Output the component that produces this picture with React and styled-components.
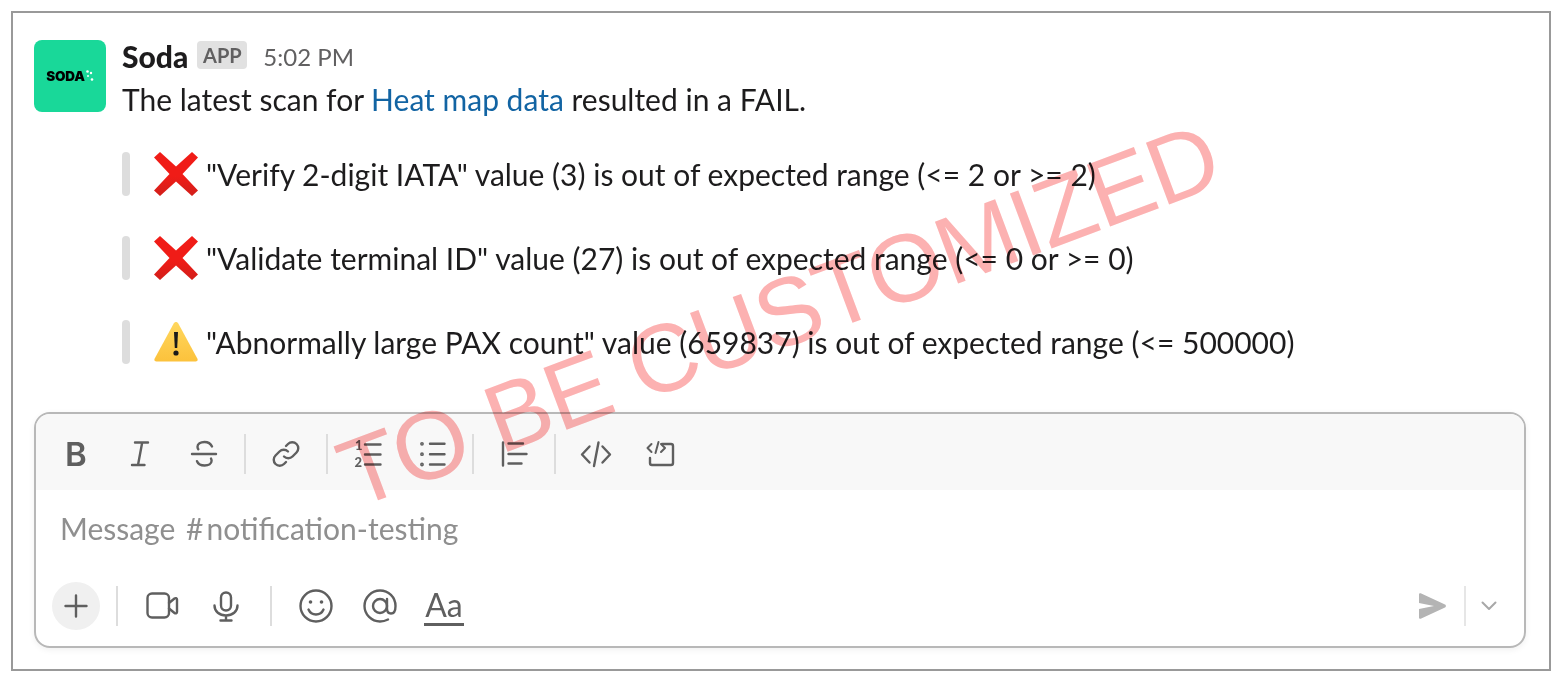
import React from "react";
import styled, { createGlobalStyle } from "styled-components";

const Global = createGlobalStyle`
  html, body {
    margin: 0;
    background: #fff;
  }
  * {
    box-sizing: border-box;
  }
`;

const Svg = ({ size = 40, children }) => (
  <svg
    width={size}
    height={size}
    viewBox="0 0 40 40"
    fill="none"
    stroke="#5f5f5f"
    strokeWidth="2.4"
    strokeLinecap="round"
    strokeLinejoin="round"
  >
    {children}
  </svg>
);

const ItalicIcon = () => (
  <Svg>
    <path d="M15 8.500h13M12 31h12.500M22.200 8.500 18 31" />
  </Svg>
);

const StrikeIcon = () => (
  <Svg>
    <path d="M8 20h24" />
    <path d="M28 12.500C26.800 9.800 24 8 20.500 8c-4 0-7 2-7 4.800 0 1 .3 1.800.8 2.500M27 24.500c.4.800.6 1.500.6 2.200 0 3-3 4.800-7 4.800-3.800 0-6.500-1.500-7.600-4.300" />
  </Svg>
);

const LinkIcon = () => (
  <Svg>
    <path d="M18 22.500a6 6 0 0 0 8.500 0l4-4a6 6 0 0 0-8.500-8.500l-2 2" />
    <path d="M22 17.500a6 6 0 0 0-8.500 0l-4 4a6 6 0 0 0 8.500 8.500l2-2" />
  </Svg>
);

const NumberedIcon = () => (
  <Svg>
    <path d="M17 10.500h15.500M17 20.500h15.500M17 30.500h15.500" />
    <NumeralText x="7" y="15.500">1</NumeralText>
    <NumeralText x="6.500" y="32.500">2</NumeralText>
  </Svg>
);

const BulletIcon = () => (
  <Svg>
    <path d="M18 9.800h14.500M18 20.200h14.500M18 30.500h14.500" />
    <circle cx="10" cy="9.800" r="0.700" fill="#5f5f5f" />
    <circle cx="10" cy="20.200" r="0.700" fill="#5f5f5f" />
    <circle cx="10" cy="30.500" r="0.700" fill="#5f5f5f" />
  </Svg>
);

const QuoteIcon = () => (
  <Svg>
    <path d="M9 8.500v23M14.500 9.500h14.500M14.500 20h18M14.500 29.500h13" />
  </Svg>
);

const CodeIcon = () => (
  <Svg>
    <path d="M13.500 12.500 6 20.500l7.500 8M26.500 12.500l7.500 8-7.500 8M22.500 8.500 18 32" />
  </Svg>
);

const CodeBlockIcon = () => (
  <Svg>
    <path d="M22 10h9a2 2 0 0 1 2 2v17a2 2 0 0 1-2 2H12a2 2 0 0 1-2-2v-5" />
    <path d="M11.500 10 7.500 14l4 4M21 10l4 4-4 4M18.500 8 15.500 19" strokeWidth="2" />
  </Svg>
);

const PlusIcon = () => (
  <Svg>
    <path d="M20 9.500v21M9.500 20h21" />
  </Svg>
);

const VideoIcon = () => (
  <Svg>
    <rect x="5.500" y="7.500" width="21.500" height="24" rx="4.500" />
    <path d="M27 17 32.500 12.500c1-.7 2.500-.3 2.500 1v12.500c0 1.300-1.500 1.700-2.500 1L27 22.500" />
  </Svg>
);

const MicIcon = () => (
  <Svg>
    <rect x="15" y="6.500" width="10" height="18" rx="5" />
    <path d="M8.500 19.500c0 6 5 10 11.500 10s11.500-4 11.500-10M20 29.500V34M14.500 34.500h11" />
  </Svg>
);

const SmileIcon = () => (
  <Svg>
    <circle cx="20" cy="20" r="15.500" />
    <circle cx="14.500" cy="16" r="1.800" fill="#5f5f5f" stroke="none" />
    <circle cx="25.500" cy="16" r="1.800" fill="#5f5f5f" stroke="none" />
    <path d="M12.500 23.500c1.500 3.500 4.200 5 7.500 5s6-1.500 7.500-5" />
  </Svg>
);

const AtIcon = () => (
  <Svg>
    <circle cx="20" cy="20" r="7" />
    <path d="M27 13v9.500c0 3.500 1.800 5 4 5 2.800 0 4.500-3 4.500-7.500C35.500 11 28.500 4.500 20 4.500 11.500 4.500 4.500 11.500 4.500 20S11.500 35.500 20 35.500c3 0 5.500-.7 8-2" />
  </Svg>
);

const SendIcon = () => (
  <svg width="28" height="26" viewBox="0 0 28 26">
    <path
      d="M1 1.500c0-1 .8-1.500 1.700-1.200L27 11.500c1.200.5 1.200 2.500 0 3L2.700 25.700C1.800 26 1 25.500 1 24.500V16l15-3L1 10Z"
      fill="#b4b4b4"
    />
  </svg>
);

const ChevronIcon = () => (
  <svg width="16" height="10" viewBox="0 0 16 10" fill="none">
    <path d="M1.500 1.500 8 8l6.500-6.500" stroke="#a8a8a8" strokeWidth="2" strokeLinecap="round" strokeLinejoin="round" />
  </svg>
);

const LogoDots = () => (
  <svg width="8" height="12" viewBox="0 0 8 12" fill="#fff">
    <circle cx="1.500" cy="1.500" r="1.300" />
    <circle cx="5" cy="3" r="1.200" />
    <circle cx="2" cy="6" r="1" />
    <circle cx="6" cy="9.500" r="1.300" />
  </svg>
);

const CrossEmoji = () => (
  <svg width="44" height="44" viewBox="0 0 44 44">
    <defs>
      <linearGradient id="crossFill" x1="0" y1="0" x2="0" y2="1">
        <stop offset="0.55" stopColor="#f01c17" />
        <stop offset="1" stopColor="#d11f1a" />
      </linearGradient>
    </defs>
    <path
      d="M6 0 22 14.500 38 0l6 5.500L28.500 22 44 38.500 38 44 22 29.500 6 44l-6-5.500L15.500 22 0 5.500Z"
      fill="url(#crossFill)"
    />
  </svg>
);

const WarningEmoji = () => (
  <svg width="44" height="44" viewBox="0 0 44 44">
    <defs>
      <linearGradient id="warnFill" x1="0" y1="0" x2="0" y2="1">
        <stop offset="0" stopColor="#ffd75e" />
        <stop offset="1" stopColor="#fcc23c" />
      </linearGradient>
    </defs>
    <path
      d="M19.700 3.500c1.100-2 3.500-2 4.600 0l19 35c.8 1.500 0 2.900-1.700 2.900H2.400C.7 41.400-.1 40 .7 38.500Z"
      fill="url(#warnFill)"
    />
    <path d="M20 12h4l-.8 16h-2.400Z" fill="#1a1a1a" />
    <circle cx="22" cy="33" r="2.600" fill="#1a1a1a" />
  </svg>
);

const alerts = [
  { id: 1, emoji: <CrossEmoji />, text: '"Verify 2-digit IATA" value (3) is out of expected range (<= 2 or >= 2)' },
  { id: 2, emoji: <CrossEmoji />, text: '"Validate terminal ID" value (27) is out of expected range (<= 0 or >= 0)' },
  { id: 3, emoji: <WarningEmoji />, text: '"Abnormally large PAX count" value (659837) is out of expected range (<= 500000)' },
];

const App = () => {
  return (
    <Frame>
      <Global />
      <Message>
        <Avatar>
          <LogoWord>SODA</LogoWord>
          <LogoDots />
        </Avatar>
        <Body>
          <Header>
            <Name>Soda</Name>
            <AppBadge>APP</AppBadge>
            <Time>5:02 PM</Time>
          </Header>
          <Line>
            The latest scan for <Anchor>Heat map data</Anchor> resulted in a FAIL.
          </Line>
          <QuoteList>
            {alerts.map((a) => (
              <Quote key={a.id}>
                <QuoteBar />
                <Emoji>{a.emoji}</Emoji>
                <span>{a.text}</span>
              </Quote>
            ))}
          </QuoteList>
        </Body>
      </Message>

      <Composer>
        <Toolbar>
          <ToolButton><BoldMark>B</BoldMark></ToolButton>
          <ToolButton><ItalicIcon /></ToolButton>
          <ToolButton><StrikeIcon /></ToolButton>
          <Divider />
          <ToolButton><LinkIcon /></ToolButton>
          <Divider />
          <ToolButton><NumberedIcon /></ToolButton>
          <ToolButton><BulletIcon /></ToolButton>
          <Divider />
          <ToolButton><QuoteIcon /></ToolButton>
          <Divider />
          <ToolButton><CodeIcon /></ToolButton>
          <ToolButton><CodeBlockIcon /></ToolButton>
        </Toolbar>
        <Placeholder>
          Message <Hash>#</Hash>notification-testing
        </Placeholder>
        <Actions>
          <PlusButton><PlusIcon /></PlusButton>
          <ActionDivider />
          <ToolButton><VideoIcon /></ToolButton>
          <ToolButton><MicIcon /></ToolButton>
          <ActionDivider />
          <ToolButton><SmileIcon /></ToolButton>
          <ToolButton><AtIcon /></ToolButton>
          <ToolButton><FormatText>Aa</FormatText></ToolButton>
          <SendGroup>
            <SendIcon />
            <SendDivider />
            <ChevronIcon />
          </SendGroup>
        </Actions>
      </Composer>

      <Watermark>TO BE CUSTOMIZED</Watermark>
    </Frame>
  );
};

const Frame = styled.div`
  position: relative;
  overflow: hidden;
  width: 1540px;
  height: 660px;
  margin: 11px;
  padding: 27px 23px 0 21px;
  border: 2px solid #999;
  font-family: "Lato", sans-serif;
  color: #1d1c1d;
`;

const Message = styled.div`
  display: flex;
  gap: 16px;
`;

const Avatar = styled.div`
  display: flex;
  align-items: center;
  justify-content: center;
  gap: 1px;
  flex: none;
  width: 72px;
  height: 72px;
  border-radius: 8px;
  background: #19d899;
`;

const LogoWord = styled.span`
  font-family: "Inter", sans-serif;
  font-size: 13.500px;
  font-weight: 900;
  letter-spacing: -0.2px;
  color: #000;
`;

const Body = styled.div`
  display: flex;
  flex-direction: column;
`;

const Header = styled.div`
  display: flex;
  align-items: center;
  height: 44px;
  margin-top: -6px;
`;

const Name = styled.span`
  font-size: 30px;
  font-weight: 900;
`;

const AppBadge = styled.span`
  display: flex;
  align-items: center;
  justify-content: center;
  width: 50px;
  height: 28px;
  margin: 0 16px 2px 9px;
  border-radius: 4px;
  background: #e1e1e1;
  color: #616061;
  font-size: 20px;
  font-weight: 700;
`;

const Time = styled.span`
  font-size: 24px;
  color: #616061;
`;

const Line = styled.div`
  height: 44px;
  font-size: 30px;
  line-height: 42px;
`;

const Anchor = styled.span`
  color: #1264a3;
`;

const QuoteList = styled.div`
  display: flex;
  flex-direction: column;
  gap: 40px;
  margin-top: 30px;
`;

const Quote = styled.div`
  display: flex;
  align-items: center;
  height: 44px;
  font-size: 30px;
  line-height: 44px;
  white-space: nowrap;
`;

const QuoteBar = styled.span`
  flex: none;
  width: 8px;
  height: 44px;
  margin-right: 24px;
  border-radius: 4px;
  background: #ddd;
`;

const Emoji = styled.span`
  display: flex;
  flex: none;
  width: 44px;
  height: 44px;
  margin-right: 8px;
`;

const Composer = styled.div`
  width: 1492px;
  height: 236px;
  margin-top: 48px;
  overflow: hidden;
  border: 2px solid #b8b8b8;
  border-radius: 16px;
  box-shadow: 0 2px 6px rgba(0, 0, 0, 0.06);
`;

const Toolbar = styled.div`
  display: flex;
  align-items: center;
  height: 76px;
  padding: 4px 8px 0;
  background: #f8f8f8;
`;

const ToolButton = styled.span`
  display: flex;
  align-items: center;
  justify-content: center;
  flex: none;
  width: 64px;
  height: 48px;
`;

const BoldMark = styled.span`
  font-family: "Inter", sans-serif;
  font-size: 33px;
  font-weight: 600;
  line-height: 40px;
  color: #5f5f5f;
`;

const NumeralText = styled.text`
  font-family: "Lato", sans-serif;
  font-size: 13px;
  font-weight: 900;
  fill: #5f5f5f;
  stroke: none;
`;

const Divider = styled.span`
  flex: none;
  width: 2px;
  height: 40px;
  margin: 0 8px;
  background: #ddd;
`;

const Placeholder = styled.div`
  height: 76px;
  padding: 0 24px;
  font-size: 30px;
  line-height: 76px;
  word-spacing: 3px;
  color: #8f8f8f;
`;

const Hash = styled.span`
  padding-right: 3px;
`;

const Actions = styled.div`
  display: flex;
  align-items: center;
  height: 80px;
  padding: 0 16px 0 16px;
`;

const PlusButton = styled.span`
  display: flex;
  align-items: center;
  justify-content: center;
  flex: none;
  width: 48px;
  height: 48px;
  margin-right: 4px;
  border-radius: 50%;
  background: #f0f0f0;
`;

const ActionDivider = styled(Divider)`
  margin: 0 12px;
`;

const FormatText = styled.span`
  padding: 0 1px;
  border-bottom: 3px solid #5f5f5f;
  font-size: 32px;
  line-height: 36px;
  color: #5f5f5f;
`;

const SendGroup = styled.div`
  display: flex;
  align-items: center;
  margin-left: auto;
  padding-right: 11px;
`;

const SendDivider = styled.span`
  width: 2px;
  height: 40px;
  margin: 0 15px 0 18px;
  background: #e6e6e6;
`;

const Watermark = styled.div`
  position: absolute;
  left: 347px;
  top: 414px;
  font-family: "Liberation Sans", sans-serif;
  font-size: 96px;
  letter-spacing: -1px;
  line-height: 1;
  white-space: nowrap;
  color: #fcb1b1;
  mix-blend-mode: multiply;
  transform: rotate(-20.500deg);
  transform-origin: left bottom;
  pointer-events: none;
`;

export default App;
